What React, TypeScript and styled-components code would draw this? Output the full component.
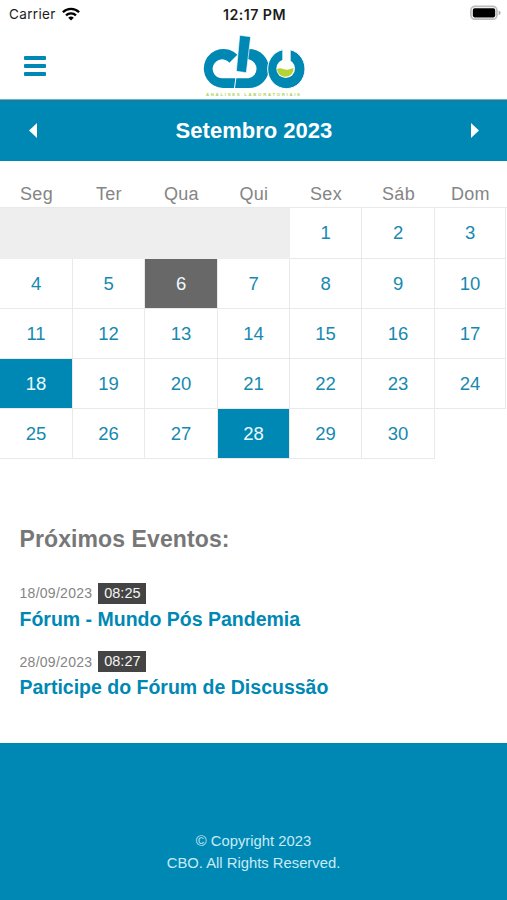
import React from "react";
import styled, { createGlobalStyle } from "styled-components";

const blue = "#0088b4";

const GlobalStyle = createGlobalStyle`
  *, *::before, *::after { box-sizing: border-box; }
  body { margin: 0; background: #fff; font-family: "Liberation Sans", Arial, sans-serif; }
`;

const Screen = styled.div`
  width: 507px;
  height: 900px;
  display: flex;
  flex-direction: column;
  overflow: hidden;
  background: #fff;
`;

const StatusBar = styled.div`
  height: 28px;
  flex: none;
  display: grid;
  grid-template-columns: 1fr auto 1fr;
  align-items: center;
  padding: 0 6px 0 9px;
  font-family: Inter, sans-serif;
  font-size: 13.5px;
  color: #1c1c1c;
`;

const Carrier = styled.div`
  display: flex;
  align-items: center;
  gap: 6px;
  letter-spacing: 0.35px;
`;

const Clock = styled.div`
  font-weight: 600;
  font-size: 14.2px;
  letter-spacing: 0.45px;
  padding-right: 1px;
`;

const BatteryIcon = styled.svg`
  justify-self: end;
  margin-top: -2px;
`;

const Header = styled.header`
  height: 72px;
  flex: none;
  display: grid;
  grid-template-columns: 1fr 104px 1fr;
  padding-top: 6px;
  border-bottom: 1px solid #69b2ca;
`;

const MenuButton = styled.button`
  justify-self: start;
  width: 22px;
  height: 20px;
  margin: 22px 0 0 23.5px;
  padding: 0;
  border: 0;
  background: none;
  display: flex;
  flex-direction: column;
  justify-content: space-between;
`;

const MenuBar = styled.span`
  height: 3.6px;
  border-radius: 1px;
  background: ${blue};
`;

const MonthBar = styled.div`
  height: 61px;
  flex: none;
  display: flex;
  align-items: center;
  justify-content: space-between;
  padding: 0 28px 0 29px;
  background: linear-gradient(#1e7c9a 0, ${blue} 3px);
  color: #fff;
`;

const MonthTitle = styled.h1`
  margin: 0;
  font-size: 22px;
  line-height: 26px;
  font-weight: 700;
  letter-spacing: 0.02px;
`;

const gridColumns = "73px 72px 73px 72px 72px 73px 71px";

const Weekdays = styled.div`
  height: 47px;
  flex: none;
  display: grid;
  grid-template-columns: ${gridColumns};
  align-items: end;
  padding-bottom: 2px;
  border-bottom: 1px solid #e9e9e9;
  font-size: 18px;
  line-height: 22px;
  letter-spacing: 0.25px;
  text-align: center;
  color: #858585;
`;

const Days = styled.div`
  display: grid;
  flex: none;
  grid-template-columns: ${gridColumns};
  grid-template-rows: 51px repeat(4, 50px);
`;

const EmptyDays = styled.div`
  grid-column: span 4;
  background: #eeeeee;
`;

const Day = styled.div<{ $tone?: string }>`
  display: flex;
  align-items: center;
  justify-content: center;
  border-right: 1px solid #e9e9e9;
  border-bottom: 1px solid #e9e9e9;
  background: ${(p) => p.$tone ?? "#fff"};
  background-clip: padding-box;
  color: ${(p) => (p.$tone ? "#eefaff" : "#1689b0")};
  font-size: 18.5px;
  letter-spacing: -0.1px;
`;

const Events = styled.section`
  flex: 1;
  padding: 65px 19.5px 0;
`;

const EventsTitle = styled.h2`
  margin: 0 0 28.5px;
  font-size: 23px;
  line-height: 30px;
  letter-spacing: 0.1px;
  color: #777;
`;

const Event = styled.article`
  height: 68.5px;
`;

const EventMeta = styled.div`
  display: flex;
  align-items: center;
  gap: 6px;
  height: 21px;
  font-size: 14px;
  color: #858585;
`;

const EventDate = styled.span`
  letter-spacing: 0.28px;
`;

const EventTime = styled.span`
  width: 48px;
  height: 21px;
  line-height: 21px;
  text-align: center;
  background: #444;
  color: #f4f4f4;
  font-size: 14.5px;
`;

const EventName = styled.h3`
  margin: 3px 0 0;
  font-size: 19.5px;
  line-height: 24px;
  color: ${blue};
`;

const Footer = styled.footer`
  height: 157px;
  flex: none;
  padding-top: 87px;
  background: ${blue};
  color: #c8ebf7;
  text-align: center;
  font-size: 14.8px;
  line-height: 22px;
`;

const Line = styled.div`
  white-space: nowrap;
`;

function Wifi() {
  return (
    <svg width="18" height="14" viewBox="0 0 18 14" fill="none" stroke="#000" strokeWidth="2.3">
      <path d="M0.9 5.2C5.4 .7 12.6 .7 17.1 5.2" />
      <path d="M4 8.4C6.8 5.7 11.2 5.7 14 8.4" />
      <path d="M9 13.6 6.2 10.7Q9 8.3 11.8 10.7Z" fill="#000" stroke="none" />
    </svg>
  );
}

function Battery() {
  return (
    <BatteryIcon width="31" height="16" viewBox="0 0 31 16">
      <rect x=".9" y="1.4" width="26" height="12.8" rx="4" fill="#fff" stroke="#bcbcbc" strokeWidth="1.7" />
      <rect x="2.8" y="3.2" width="22.4" height="9.2" rx="1.8" fill="#000" />
      <path d="M28.6 5.4q2 .7 2 2.4t-2 2.4Z" fill="#aaa" />
    </BatteryIcon>
  );
}

function Logo() {
  return (
    <svg width="104" height="64" viewBox="36 102 312 192" role="img" aria-label="CBO">
      <g fill={blue}>
        <path d="M142 164A59 58.5 0 1 0 99 264H132L136 235H99A28.5 28.5 0 1 1 118 188Z" />
        <path d="M178 147A58.5 58.5 0 0 1 178 264H135L139 235H176A29 29 0 0 0 176 178H170Z" />
        <path d="M149 106 182 110 169 218 139 214Z" stroke="#fff" strokeWidth="2" />
        <ellipse cx="289" cy="207" rx="56" ry="59" stroke="#fff" strokeWidth="3" />
      </g>
      <circle cx="287" cy="206" r="28" fill="#fff" />
      <path d="M277 142H302V183H277Z" fill="#fff" />
      <path d="M261 207Q269 202 280 207T300 207L311 204A25 25 0 0 1 261 207Z" fill="#b5d334" />
      <text
        x="48"
        y="288"
        fontFamily="Liberation Sans, Arial, sans-serif"
        fontWeight="700"
        fontSize="13"
        textLength="282"
        fill="#b0cf5c"
      >
        ANÁLISES LABORATORIAIS
      </text>
    </svg>
  );
}

const Arrow = ({ back }: { back?: boolean }) => (
  <svg width="8" height="15" viewBox="0 0 8 15" fill="#fff">
    <path d={back ? "M8 0V15L0 7.5Z" : "M0 0V15L8 7.5Z"} />
  </svg>
);

const weekdays = ["Seg", "Ter", "Qua", "Qui", "Sex", "Sáb", "Dom"];
const tones: Record<number, string> = { 6: "#686868", 18: blue, 28: blue };
const events = [
  { date: "18/09/2023", time: "08:25", name: "Fórum - Mundo Pós Pandemia" },
  { date: "28/09/2023", time: "08:27", name: "Participe do Fórum de Discussão" },
];

export default function App() {
  return (
    <Screen>
      <GlobalStyle />
      <StatusBar>
        <Carrier>
          Carrier <Wifi />
        </Carrier>
        <Clock>12:17 PM</Clock>
        <Battery />
      </StatusBar>
      <Header>
        <MenuButton aria-label="Menu">
          <MenuBar />
          <MenuBar />
          <MenuBar />
        </MenuButton>
        <Logo />
      </Header>
      <MonthBar>
        <Arrow back />
        <MonthTitle>Setembro 2023</MonthTitle>
        <Arrow />
      </MonthBar>
      <Weekdays>
        {weekdays.map((d) => (
          <span key={d}>{d}</span>
        ))}
      </Weekdays>
      <Days>
        <EmptyDays />
        {Array.from({ length: 30 }, (_, i) => i + 1).map((n) => (
          <Day key={n} $tone={tones[n]}>
            {n}
          </Day>
        ))}
      </Days>
      <Events>
        <EventsTitle>Próximos Eventos:</EventsTitle>
        {events.map((e) => (
          <Event key={e.date}>
            <EventMeta>
              <EventDate>{e.date}</EventDate>
              <EventTime>{e.time}</EventTime>
            </EventMeta>
            <EventName>{e.name}</EventName>
          </Event>
        ))}
      </Events>
      <Footer>
        <Line>© Copyright 2023</Line>
        <Line>CBO. All Rights Reserved.</Line>
      </Footer>
    </Screen>
  );
}
